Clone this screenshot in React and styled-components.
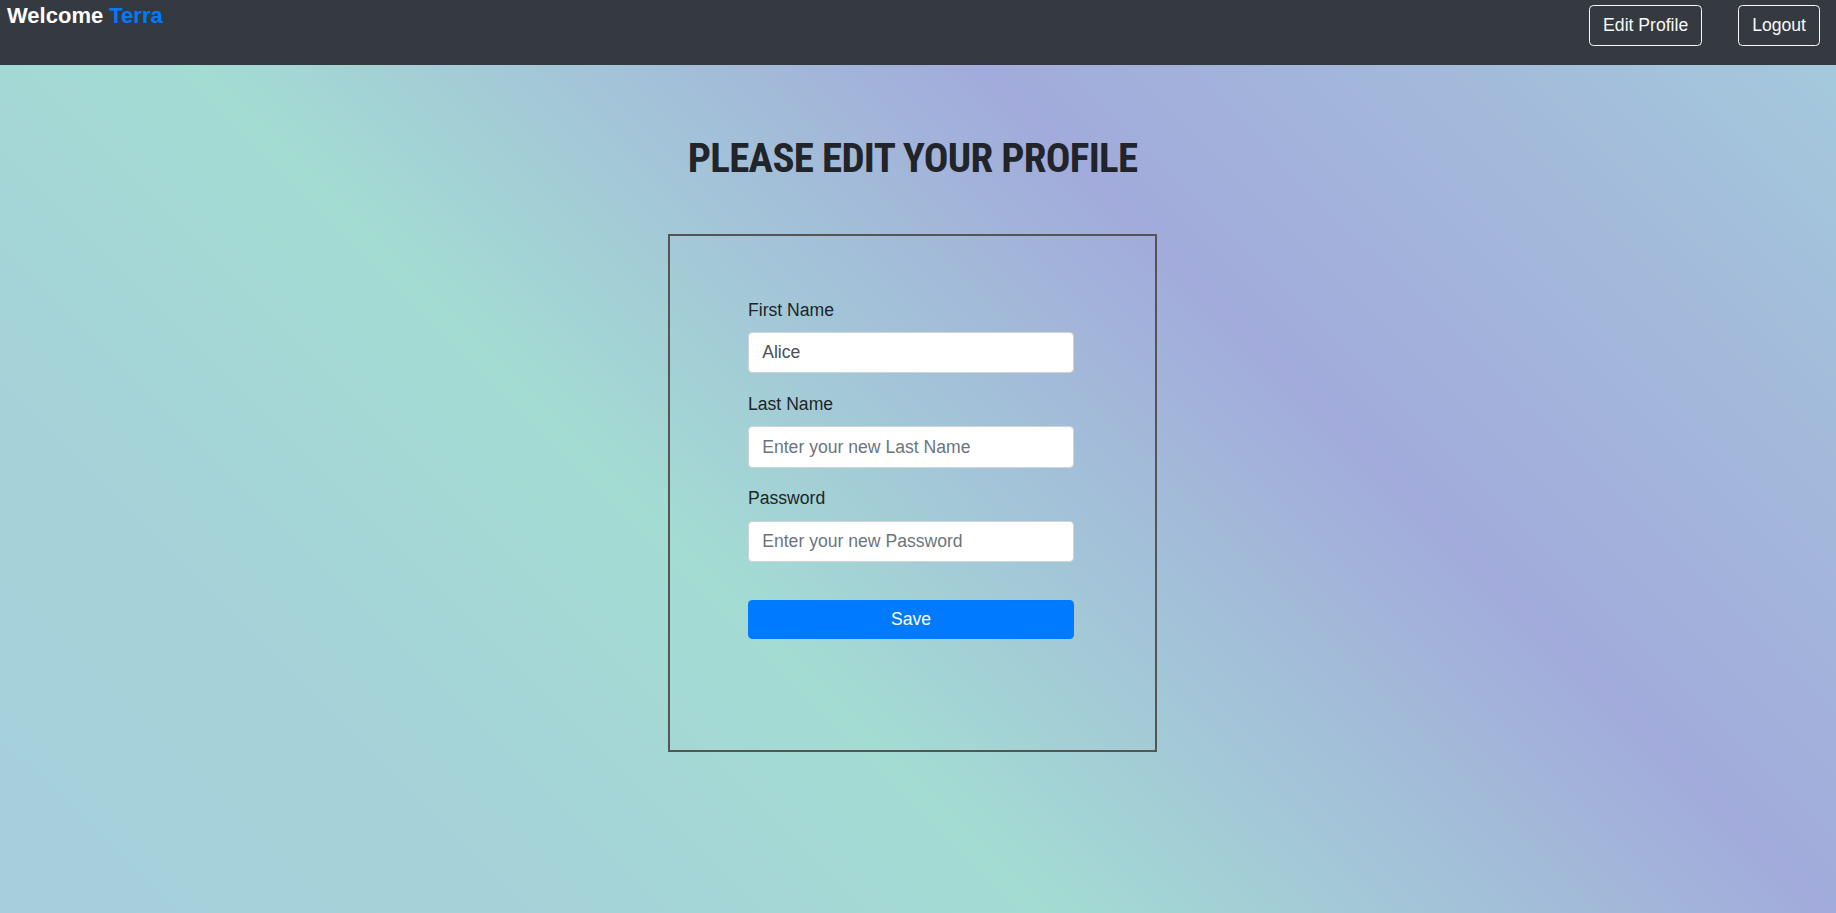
import React, { useState } from 'react'
import styled, { createGlobalStyle } from 'styled-components'

const GlobalStyle = createGlobalStyle`
  html, body {
    margin: 0;
    padding: 0;
  }
  body {
    font-family: "Liberation Sans", Arial, Helvetica, sans-serif;
    font-size: 17.6px;
    color: #212529;
  }
  * {
    box-sizing: border-box;
  }
`

export default function App() {
  const [firstName, setFirstName] = useState('Alice')
  const [lastName, setLastName] = useState('')
  const [password, setPassword] = useState('')

  return (
    <Page>
      <GlobalStyle />
      <Navbar>
        <Brand>
          Welcome <User>Terra</User>
        </Brand>
        <NavActions>
          <NavButton>Edit Profile</NavButton>
          <NavButton>Logout</NavButton>
        </NavActions>
      </Navbar>

      <Main>
        <Title>PLEASE EDIT YOUR PROFILE</Title>

        <FormBox>
          <Form onSubmit={(e) => e.preventDefault()}>
            <Field>
              <Label>First Name</Label>
              <Input
                value={firstName}
                onChange={(e) => setFirstName(e.target.value)}
              />
            </Field>
            <Field>
              <Label>Last Name</Label>
              <Input
                placeholder="Enter your new Last Name"
                value={lastName}
                onChange={(e) => setLastName(e.target.value)}
              />
            </Field>
            <Field>
              <Label>Password</Label>
              <Input
                type="password"
                placeholder="Enter your new Password"
                value={password}
                onChange={(e) => setPassword(e.target.value)}
              />
            </Field>
            <SaveButton type="submit">Save</SaveButton>
          </Form>
        </FormBox>
      </Main>
    </Page>
  )
}

const Page = styled.div`
  display: flex;
  flex-direction: column;
  min-height: 100vh;
`

const Navbar = styled.nav`
  height: 65px;
  flex-shrink: 0;
  display: flex;
  justify-content: space-between;
  align-items: flex-start;
  padding: 0 16px 0 7px;
  background: #343a40;
`

const Brand = styled.h5`
  margin: 3px 0 0;
  font-size: 22px;
  font-weight: 700;
  line-height: 1.2;
  color: #fff;
`

const User = styled.span`
  color: #007bff;
`

const NavActions = styled.div`
  display: flex;
  gap: 36px;
  margin-top: 5px;
`

const NavButton = styled.button`
  height: 41px;
  padding: 0 13px;
  border: 1px solid #f8f9fa;
  border-radius: 4.4px;
  background: transparent;
  color: #f8f9fa;
  font-family: inherit;
  font-size: 17.6px;
  cursor: pointer;
`

const Main = styled.main`
  flex: 1;
  display: flex;
  flex-direction: column;
  align-items: center;
  padding-right: 11px;
  background: linear-gradient(
    45deg,
    #a6cedc 0%,
    #a5d3d8 22%,
    #a3dcd3 39%,
    #a3c3d8 54%,
    #a2abdb 68%,
    #a3b8db 84%,
    #a4c9dc 100%
  );
`

const Title = styled.h1`
  margin: 68.5px 0 0;
  font-family: "Roboto Condensed", "Liberation Sans Narrow", "DejaVu Sans Condensed", Roboto, sans-serif;
  font-size: 41px;
  font-weight: 700;
  line-height: 1.2;
  letter-spacing: -0.7px;
  color: #212529;
`

const FormBox = styled.div`
  width: 489px;
  height: 518px;
  margin-top: 51px;
  padding: 61px 0 0 78px;
  border: 2px solid #555;
`

const Form = styled.form`
  width: 326px;
`

const Field = styled.div`
  margin-bottom: 17.6px;
`

const Label = styled.label`
  display: block;
  margin-bottom: 8.8px;
  line-height: 1.5;
  color: #212529;
`

const Input = styled.input`
  display: block;
  width: 100%;
  height: 41.6px;
  padding: 6.6px 13.2px;
  border: 1px solid #ced4da;
  border-radius: 4.4px;
  background: #fff;
  font-family: inherit;
  font-size: 17.6px;
  color: #495057;
  outline: none;

  &::placeholder {
    color: #6c757d;
  }
`

const SaveButton = styled.button`
  display: block;
  width: 100%;
  height: 39px;
  margin-top: 38px;
  border: none;
  border-radius: 4.4px;
  background: #007bff;
  color: #fff;
  font-family: inherit;
  font-size: 17.6px;
  cursor: pointer;
`
